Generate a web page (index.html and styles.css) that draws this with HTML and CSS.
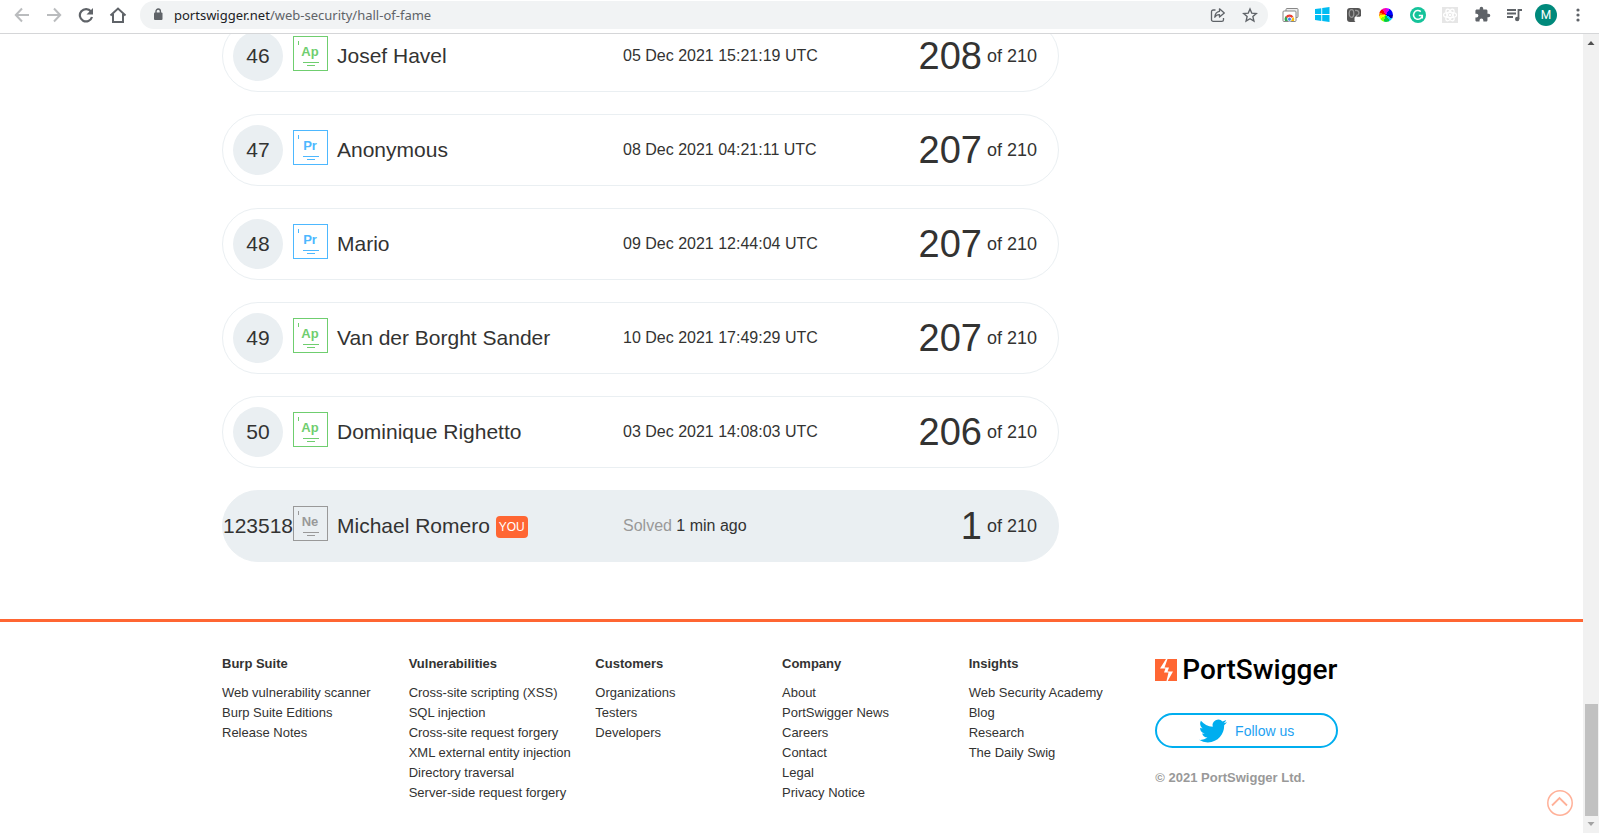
FILE: index.html
```html
<!DOCTYPE html>
<html lang="en">
<head>
<meta charset="utf-8">
<title>Hall of Fame | Web Security Academy</title>
<link rel="stylesheet" href="styles.css">
</head>
<body>
<header class="toolbar">
  <button class="tool muted" aria-label="Back"><svg width="16" height="16" viewBox="0 0 16 16" fill="none" stroke="currentColor" stroke-width="2"><path d="M15 8H2M8 1.500L1.800 8l6.200 6.500"/></svg></button>
  <button class="tool muted" aria-label="Forward"><svg width="16" height="16" viewBox="0 0 16 16" fill="none" stroke="currentColor" stroke-width="2"><path d="M1 8h13M8 1.500L14.200 8 8 14.500"/></svg></button>
  <button class="tool" aria-label="Reload"><svg width="16" height="16" viewBox="0 0 16 16"><path d="M13 4.500A6.200 6.200 0 1 0 14 10" fill="none" stroke="currentColor" stroke-width="2.200"/><path d="M15 1v6.500H8.500z" fill="currentColor"/></svg></button>
  <button class="tool" aria-label="Home"><svg width="18" height="18" viewBox="0 0 18 18" fill="none" stroke="currentColor" stroke-width="2"><path d="M1.500 9.500L9 2.500l7.500 7M4 8v8h10V8"/></svg></button>
  <div class="omnibox">
    <svg class="lock" width="10" height="13" viewBox="0 0 10 13"><rect x="1" y="4.500" width="8.500" height="7.500" rx="1" fill="#5f6368"/><path d="M3 5V3.200a2.200 2.200 0 0 1 4.400 0V5" fill="none" stroke="#5f6368" stroke-width="1.400"/></svg>
    <span class="url"><span class="host">portswigger.net</span>/web-security/hall-of-fame</span>
    <button class="tool" aria-label="Share this page"><svg width="16" height="16" viewBox="0 0 16 16" fill="none" stroke="currentColor" stroke-width="1.300"><path d="M5.500 3H3.200A1.700 1.700 0 0 0 1.500 4.700v8a1.700 1.700 0 0 0 1.700 1.700h8.600a1.700 1.700 0 0 0 1.700-1.700V11"/><path d="M9.500 1.800L14.300 6l-4.800 4V7.600C7.200 7.500 5.800 8.500 4.800 10.300 5 7 6.600 4.700 9.500 4.300z" stroke-linejoin="round"/></svg></button>
    <button class="tool" aria-label="Bookmark this tab"><svg width="16" height="16" viewBox="0 0 16 16" fill="none" stroke="currentColor" stroke-width="1.400"><path d="M8 2l1.800 4.200 4.500.4-3.400 3 1 4.400L8 11.700 4.100 14l1-4.400-3.400-3 4.500-.4z"/></svg></button>
  </div>
  <div class="extensions">
    <button class="tool" aria-label="Remote Desktop"><svg width="17" height="16" viewBox="0 0 17 16"><rect x="4" y="1.500" width="12" height="9" rx="1" fill="#eee" stroke="#888"/><rect x="1" y="4" width="13" height="10.500" rx="1" fill="#fff" stroke="#888"/><path d="M3 14a4.500 4.500 0 0 1 1-5l3.500 5z" fill="#34a853"/><path d="M3.500 10a4.500 4.500 0 0 1 8 0l-4 1.500z" fill="#ea4335"/><path d="M11.500 10A4.500 4.500 0 0 1 12 14H7.500z" fill="#fbbc05"/><circle cx="7.500" cy="12.200" r="2" fill="#4285f4" stroke="#fff" stroke-width=".8"/></svg></button>
    <button class="tool" aria-label="Windows"><svg width="15" height="15" viewBox="0 0 15 15" fill="#00bcf2"><path d="M0 2l6.300-.8v5.900H0zM7.200 1.100L14.500 0v7.100H7.200zM0 8h6.300v5.900L0 13zM7.200 8h7.300v7l-7.300-1z"/></svg></button>
    <button class="tool" aria-label="Tracker"><svg width="16" height="16" viewBox="0 0 16 16"><rect x="1" y="1" width="14" height="14" rx="3" fill="#555"/><ellipse cx="5.500" cy="6.500" rx="2.300" ry="3.800" fill="none" stroke="#999" stroke-width="1.300"/><path d="M9 3.500c5-1 5 5 1 5" fill="none" stroke="#999" stroke-width="1.300"/><path d="M8.500 10.500l1.500-1.500 1 .8h3l1.500-1.300v5.500L14 15.500h-4L8.500 14z" fill="#fff"/></svg></button>
    <button class="tool" aria-label="Color picker"><span class="wheel"></span></button>
    <button class="tool" aria-label="Grammar checker"><svg width="16" height="16" viewBox="0 0 16 16"><circle cx="8" cy="8" r="8" fill="#15c39a"/><path d="M10.800 4.600A4.400 4.400 0 1 0 12.300 8.500H8.800M12.300 8.500v3" fill="none" stroke="#fff" stroke-width="1.500"/></svg></button>
    <button class="tool" aria-label="React tools"><svg width="16" height="16" viewBox="0 0 16 16"><rect width="16" height="16" fill="#e6e6e6"/><g fill="none" stroke="#fff" stroke-width="1.200"><ellipse cx="8" cy="8" rx="6.500" ry="2.600"/><ellipse cx="8" cy="8" rx="6.500" ry="2.600" transform="rotate(60 8 8)"/><ellipse cx="8" cy="8" rx="6.500" ry="2.600" transform="rotate(120 8 8)"/></g><circle cx="8" cy="8" r="1.300" fill="#fff"/></svg></button>
    <button class="tool" aria-label="Extensions"><svg width="17" height="17" viewBox="0 0 24 24" fill="currentColor"><path d="M20.500 11H19V7c0-1.100-.9-2-2-2h-4V3.500a2.500 2.500 0 0 0-5 0V5H4c-1.100 0-2 .9-2 2v3.800h1.500a2.700 2.700 0 0 1 0 5.400H2V20c0 1.100.9 2 2 2h3.800v-1.500a2.700 2.700 0 0 1 5.400 0V22H17c1.100 0 2-.9 2-2v-4h1.500a2.500 2.500 0 0 0 0-5z"/></svg></button>
    <button class="tool" aria-label="Media controls"><svg width="17" height="14" viewBox="0 0 17 14" fill="none" stroke="currentColor" stroke-width="1.800"><path d="M1 2h9M1 5.500h9M1 9h6M12.500 11V2H16"/><circle cx="11.200" cy="11" r="2.200" fill="currentColor" stroke="none"/></svg></button>
  </div>
  <button class="avatar" aria-label="Profile M">M</button>
  <button class="more" aria-label="Menu"><svg width="4" height="14" viewBox="0 0 4 14" fill="currentColor"><circle cx="2" cy="2" r="1.600"/><circle cx="2" cy="7" r="1.600"/><circle cx="2" cy="12" r="1.600"/></svg></button>
</header>

<div class="viewport">
  <div class="page">
    <main class="container">
      <ol class="ranking">
        <li class="entry">
          <span class="rank"><span class="disc">46</span></span>
          <span class="level apprentice">Ap</span>
          <span class="name">Josef Havel</span>
          <span class="date">05 Dec 2021 15:21:19 UTC</span>
          <span class="score"><strong class="solved">208</strong> of 210</span>
        </li>
        <li class="entry">
          <span class="rank"><span class="disc">47</span></span>
          <span class="level practitioner">Pr</span>
          <span class="name">Anonymous</span>
          <span class="date">08 Dec 2021 04:21:11 UTC</span>
          <span class="score"><strong class="solved">207</strong> of 210</span>
        </li>
        <li class="entry">
          <span class="rank"><span class="disc">48</span></span>
          <span class="level practitioner">Pr</span>
          <span class="name">Mario</span>
          <span class="date">09 Dec 2021 12:44:04 UTC</span>
          <span class="score"><strong class="solved">207</strong> of 210</span>
        </li>
        <li class="entry">
          <span class="rank"><span class="disc">49</span></span>
          <span class="level apprentice">Ap</span>
          <span class="name">Van der Borght Sander</span>
          <span class="date">10 Dec 2021 17:49:29 UTC</span>
          <span class="score"><strong class="solved">207</strong> of 210</span>
        </li>
        <li class="entry">
          <span class="rank"><span class="disc">50</span></span>
          <span class="level apprentice">Ap</span>
          <span class="name">Dominique Righetto</span>
          <span class="date">03 Dec 2021 14:08:03 UTC</span>
          <span class="score"><strong class="solved">206</strong> of 210</span>
        </li>
        <li class="entry current">
          <span class="rank"><span class="disc">123518</span></span>
          <span class="level newbie">Ne</span>
          <span class="name">Michael Romero <span class="you">YOU</span></span>
          <span class="date"><span class="label">Solved</span> 1 min ago</span>
          <span class="score"><strong class="solved">1</strong> of 210</span>
        </li>
      </ol>
    </main>

    <footer class="footer">
      <div class="container columns">
        <nav class="column">
          <h2 class="heading">Burp Suite</h2>
          <a href="#">Web vulnerability scanner</a>
          <a href="#">Burp Suite Editions</a>
          <a href="#">Release Notes</a>
        </nav>
        <nav class="column">
          <h2 class="heading">Vulnerabilities</h2>
          <a href="#">Cross-site scripting (XSS)</a>
          <a href="#">SQL injection</a>
          <a href="#">Cross-site request forgery</a>
          <a href="#">XML external entity injection</a>
          <a href="#">Directory traversal</a>
          <a href="#">Server-side request forgery</a>
        </nav>
        <nav class="column">
          <h2 class="heading">Customers</h2>
          <a href="#">Organizations</a>
          <a href="#">Testers</a>
          <a href="#">Developers</a>
        </nav>
        <nav class="column">
          <h2 class="heading">Company</h2>
          <a href="#">About</a>
          <a href="#">PortSwigger News</a>
          <a href="#">Careers</a>
          <a href="#">Contact</a>
          <a href="#">Legal</a>
          <a href="#">Privacy Notice</a>
        </nav>
        <nav class="column">
          <h2 class="heading">Insights</h2>
          <a href="#">Web Security Academy</a>
          <a href="#">Blog</a>
          <a href="#">Research</a>
          <a href="#">The Daily Swig</a>
        </nav>
        <div class="brand">
          <a class="logo" href="#">
            <svg width="22" height="22" viewBox="0 0 22 22"><rect width="22" height="22" fill="#ff6633"/><path d="M12.500 0h-1.500L5 9.500h5.500L9 13.500h4.500L11.500 22h1.200L18 12.500h-5.500L14 8.500H9.500z" fill="#fff"/></svg>
            <span>PortSwigger</span>
          </a>
          <a class="follow" href="#">
            <svg width="28" height="28" viewBox="0 0 24 24" fill="#00aeef"><path d="M23.950 4.570a10 10 0 0 1-2.820.77 4.960 4.960 0 0 0 2.160-2.720c-.95.550-2 .950-3.120 1.180a4.920 4.920 0 0 0-8.390 4.480C7.690 8.090 4.070 6.130 1.640 3.160a4.820 4.820 0 0 0-.67 2.480c0 1.710.87 3.210 2.190 4.100a4.900 4.900 0 0 1-2.230-.62v.06a4.920 4.920 0 0 0 3.950 4.830 5 5 0 0 1-2.210.08 4.940 4.940 0 0 0 4.600 3.420A9.870 9.870 0 0 1 0 19.540a14 14 0 0 0 7.550 2.210c9.050 0 14-7.500 14-13.990 0-.210 0-.420-.02-.630a9.940 9.940 0 0 0 2.460-2.550z"/></svg>
            <span>Follow us</span>
          </a>
          <p class="copyright">© 2021 PortSwigger Ltd.</p>
        </div>
      </div>
    </footer>
    <button class="to-top" aria-label="Back to top"><svg width="26" height="26" viewBox="0 0 26 26" fill="none" stroke="#ffb199"><circle cx="13" cy="13" r="12.200" stroke-width="1.500"/><path d="M5 15.500L12.500 8l7.500 7.500" stroke-width="1.800"/></svg></button>
  </div>
  <div class="scrollbar">
    <svg width="16" height="17" viewBox="0 0 16 17"><path d="M4.500 11h7L8 7z" fill="#505050"/></svg>
    <div class="track"><div class="thumb"></div></div>
    <svg width="16" height="17" viewBox="0 0 16 17"><path d="M4.500 6h7L8 10z" fill="#a3a3a3"/></svg>
  </div>
</div>
</body>
</html>
```

FILE: styles.css
```css
* {
  box-sizing: border-box;
}

body {
  margin: 0;
  height: 100vh;
  display: flex;
  flex-direction: column;
  overflow: hidden;
  background: #fff;
  color: #333332;
  font-family: "Liberation Sans", Arial, sans-serif;
}

button {
  padding: 0;
  border: 0;
  background: none;
  font: inherit;
}

a {
  color: inherit;
  text-decoration: none;
}

/* Browser toolbar */

.toolbar {
  flex: none;
  display: flex;
  align-items: center;
  height: 34px;
  padding: 0 9px 4px 6px;
  border-bottom: 1px solid #d5d6d8;
  color: #5f6368;
}

.tool {
  flex: none;
  display: flex;
  align-items: center;
  justify-content: center;
  width: 32px;
  height: 28px;
  color: #5f6368;
}

.muted {
  color: #babcbe;
}

.omnibox {
  flex: 1;
  display: flex;
  align-items: center;
  height: 28px;
  margin: 0 6px;
  padding: 0 2px 0 13px;
  border-radius: 14px;
  background: #f1f3f4;
}

.url {
  flex: 1;
  margin-left: 11px;
  font: 13px/20px "Noto Sans", "Open Sans", sans-serif;
  white-space: nowrap;
}

.host {
  color: #202124;
}

.extensions {
  display: flex;
}

.wheel {
  width: 14px;
  height: 14px;
  border-radius: 50%;
  background: conic-gradient(#c0f 0 30deg, #00f 30deg 90deg, #00a 90deg 120deg, #0cf 120deg 150deg, #0c4 150deg 200deg, #8f0 200deg 235deg, #ff0 235deg 265deg, #f80 265deg 290deg, #f00 290deg 325deg, #f0a 325deg);
}

.avatar {
  flex: none;
  width: 22px;
  height: 22px;
  margin: 0 9px 0 5px;
  border-radius: 50%;
  background: #00897b;
  color: #fff;
  font: 12px/22px Roboto, sans-serif;
  text-align: center;
}

.more {
  flex: none;
  display: flex;
  align-items: center;
  justify-content: center;
  width: 24px;
  height: 28px;
  color: #5f6368;
}

/* Page area */

.viewport {
  flex: 1;
  min-height: 0;
  display: flex;
}

.page {
  position: relative;
  flex: 1;
  min-width: 0;
  overflow: hidden;
}

.container {
  max-width: 1139px;
  margin: 0 auto;
}

.ranking {
  display: grid;
  gap: 22px;
  max-width: 837px;
  margin: -14px 0 57px;
  padding: 0;
  list-style: none;
}

.entry {
  display: grid;
  grid-template-columns: 70px 44px 286fr 235fr 179fr;
  align-items: center;
  height: 72px;
  padding-right: 21px;
  border: 1px solid #eaeff2;
  border-radius: 36px;
}

.rank {
  display: flex;
  justify-content: center;
  font-size: 21px;
}

.disc {
  width: 50px;
  border-radius: 25px;
  background: #eaeff2;
  line-height: 50px;
  text-align: center;
}

.current {
  background: #eaeff2;
}

.current .disc {
  width: auto;
}

.level {
  width: 35px;
  height: 35px;
  margin-bottom: 5px;
  padding-right: 1px;
  border: 1px solid;
  background:
    linear-gradient(currentColor, currentColor) 4px 4px / 1px 4px no-repeat,
    linear-gradient(currentColor, currentColor) 9px 25px / 16px 1px no-repeat,
    linear-gradient(currentColor, currentColor) 13px 28px / 8px 1px no-repeat;
  font: bold 13px/29px "Liberation Sans Narrow", "Liberation Sans", sans-serif;
  text-align: center;
}

.apprentice {
  color: #6fce6f;
}

.practitioner {
  color: #4db8ff;
}

.newbie {
  color: #999;
}

.name {
  font-size: 21px;
  white-space: nowrap;
}

.you {
  display: inline-block;
  padding: 0 3px;
  border-radius: 4px;
  background: #ff6633;
  color: #fff;
  font-size: 12px;
  line-height: 22px;
  vertical-align: 2px;
}

.date {
  font-size: 16px;
}

.label {
  color: #999;
}

.score {
  display: flex;
  align-items: center;
  justify-content: flex-end;
  gap: 5px;
  font-size: 18px;
  white-space: nowrap;
}

.solved {
  font-size: 38px;
  font-weight: normal;
}

/* Footer */

.footer {
  padding: 32px 0;
  border-top: 3px solid #ff6633;
  font-size: 13px;
  line-height: 20px;
}

.columns {
  display: grid;
  grid-template-columns: repeat(6, minmax(0, 1fr));
  gap: 4px;
  padding-right: 23px;
}

.column {
  display: flex;
  flex-direction: column;
  white-space: nowrap;
}

.heading {
  margin: 0 0 9px;
  font-size: 13px;
}

.brand {
  display: flex;
  flex-direction: column;
}

.logo {
  display: flex;
  align-items: center;
  gap: 5px;
  height: 32px;
  color: #000;
  font: 500 28px/32px Roboto, sans-serif;
}

.follow {
  display: flex;
  align-items: center;
  justify-content: center;
  gap: 8px;
  height: 35px;
  margin-top: 27px;
  border: 2px solid #00aeef;
  border-radius: 18px;
  color: #1da1f2;
  font-size: 14px;
}

.copyright {
  margin: 20px 0 0;
  color: #999;
  font-weight: bold;
}

.to-top {
  position: absolute;
  right: 10px;
  bottom: 17px;
  display: flex;
}

/* Scrollbar */

.scrollbar {
  flex: none;
  display: flex;
  flex-direction: column;
  width: 16px;
  background: #f1f1f1;
}

.track {
  flex: 1;
  display: flex;
  align-items: flex-end;
}

.thumb {
  flex: 1;
  height: 112px;
  margin: 0 1px 0 2px;
  background: #c1c1c1;
}
```
